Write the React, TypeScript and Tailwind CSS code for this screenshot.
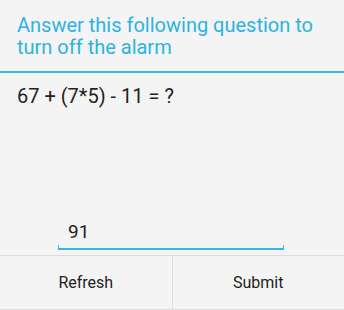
import { useState } from 'react';

// 闹钟解题对话框
export default function App() {
  const [answer, setAnswer] = useState('91');

  return (
    <div
      className="w-[344px] h-[310px] flex flex-col bg-[#f4f4f4] text-[#222]"
      style={{ fontFamily: 'Roboto, "Liberation Sans", sans-serif' }}
    >
      {/* 标题 */}
      <div className="px-[17px] pt-[14px] pb-[13px] border-b-2 border-[#33b5e5]">
        <h1 className="text-[20px] leading-[22px] text-[#2db3e0]">
          Answer this following question to turn off the alarm
        </h1>
      </div>

      {/* 题目与输入 */}
      <div className="flex-1 flex flex-col px-[17px] pt-[11px]">
        <p className="text-[20px] leading-[24px]">67 + (7*5) - 11 = ?</p>
        <div className="mt-auto mb-[5px] ml-[41px] w-[226px]">
          <input
            value={answer}
            onChange={(e) => setAnswer(e.target.value)}
            className="w-full bg-transparent px-[10px] text-[19px] leading-[24px] outline-none"
          />
          <div className="h-[5px] border-x border-b-2 border-[#33b5e5]" />
        </div>
      </div>

      {/* 按钮 */}
      <div className="h-[55px] flex border-t border-b border-[#dcdcdc]">
        <button className="flex-1 text-[16px] border-r border-[#dcdcdc]">Refresh</button>
        <button className="flex-1 text-[16px]">Submit</button>
      </div>
    </div>
  );
}
